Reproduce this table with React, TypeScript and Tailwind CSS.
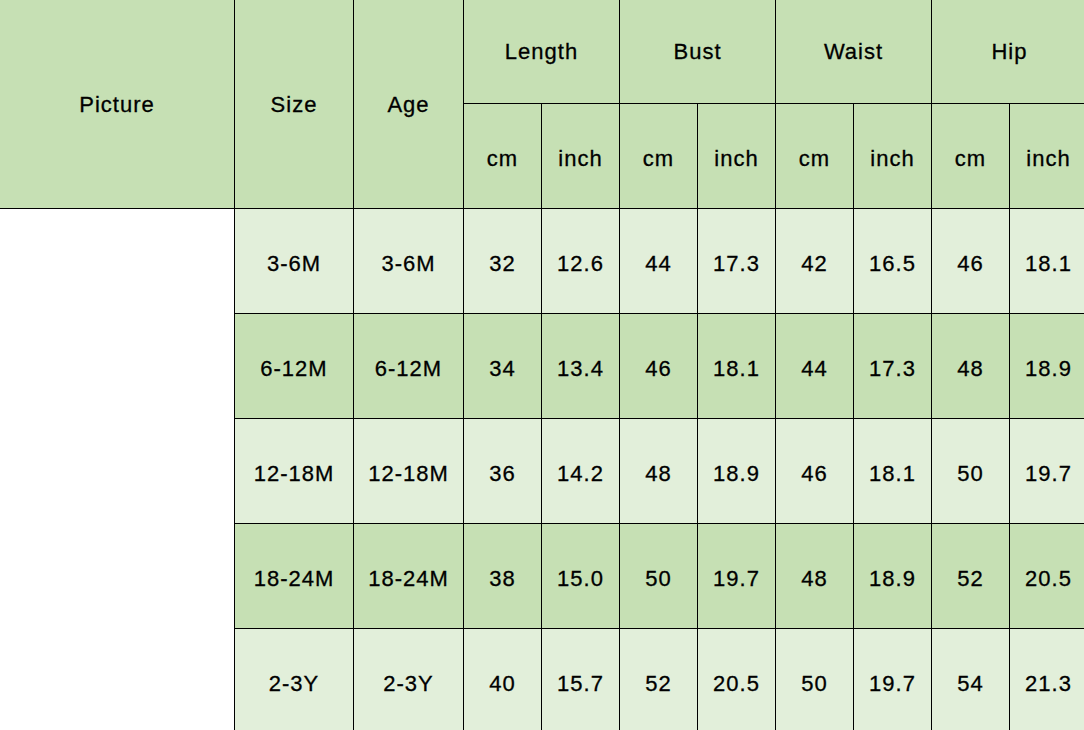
import React from "react";

const groups = ["Length", "Bust", "Waist", "Hip"];

const rows = [
  ["3-6M", "3-6M", "32", "12.6", "44", "17.3", "42", "16.5", "46", "18.1"],
  ["6-12M", "6-12M", "34", "13.4", "46", "18.1", "44", "17.3", "48", "18.9"],
  ["12-18M", "12-18M", "36", "14.2", "48", "18.9", "46", "18.1", "50", "19.7"],
  ["18-24M", "18-24M", "38", "15.0", "50", "19.7", "48", "18.9", "52", "20.5"],
  ["2-3Y", "2-3Y", "40", "15.7", "52", "20.5", "50", "19.7", "54", "21.3"],
];

export default function App() {
  const cell = "flex items-center justify-center";
  return (
    <div
      className="w-[1084px] h-[730px] overflow-hidden bg-white text-black text-[22px] tracking-[1px] [-webkit-text-stroke:0.3px_black]"
      style={{ fontFamily: '"Liberation Sans", Arial, sans-serif' }}
    >
      <div className="grid w-[1087px] grid-cols-[234px_118px_109px_repeat(8,77px)] grid-rows-[103px_104px_repeat(5,104px)] gap-px bg-black">
        <div className={`${cell} row-span-2 bg-[#c6e0b4]`}>Picture</div>
        <div className={`${cell} row-span-2 bg-[#c6e0b4]`}>Size</div>
        <div className={`${cell} row-span-2 bg-[#c6e0b4]`}>Age</div>
        {groups.map((g) => (
          <div key={g} className={`${cell} col-span-2 bg-[#c6e0b4]`}>
            {g}
          </div>
        ))}
        {groups.map((g) => (
          <React.Fragment key={g + "-u"}>
            <div className={`${cell} bg-[#c6e0b4] pt-1`}>cm</div>
            <div className={`${cell} bg-[#c6e0b4] pt-1`}>inch</div>
          </React.Fragment>
        ))}
        <div className="row-span-5 bg-white" />
        {rows.map((r, i) =>
          r.map((v, j) => (
            <div
              key={i + "-" + j}
              className={`${cell} pt-1 ${i % 2 === 0 ? "bg-[#e2efda]" : "bg-[#c6e0b4]"}`}
            >
              {v}
            </div>
          ))
        )}
      </div>
    </div>
  );
}
